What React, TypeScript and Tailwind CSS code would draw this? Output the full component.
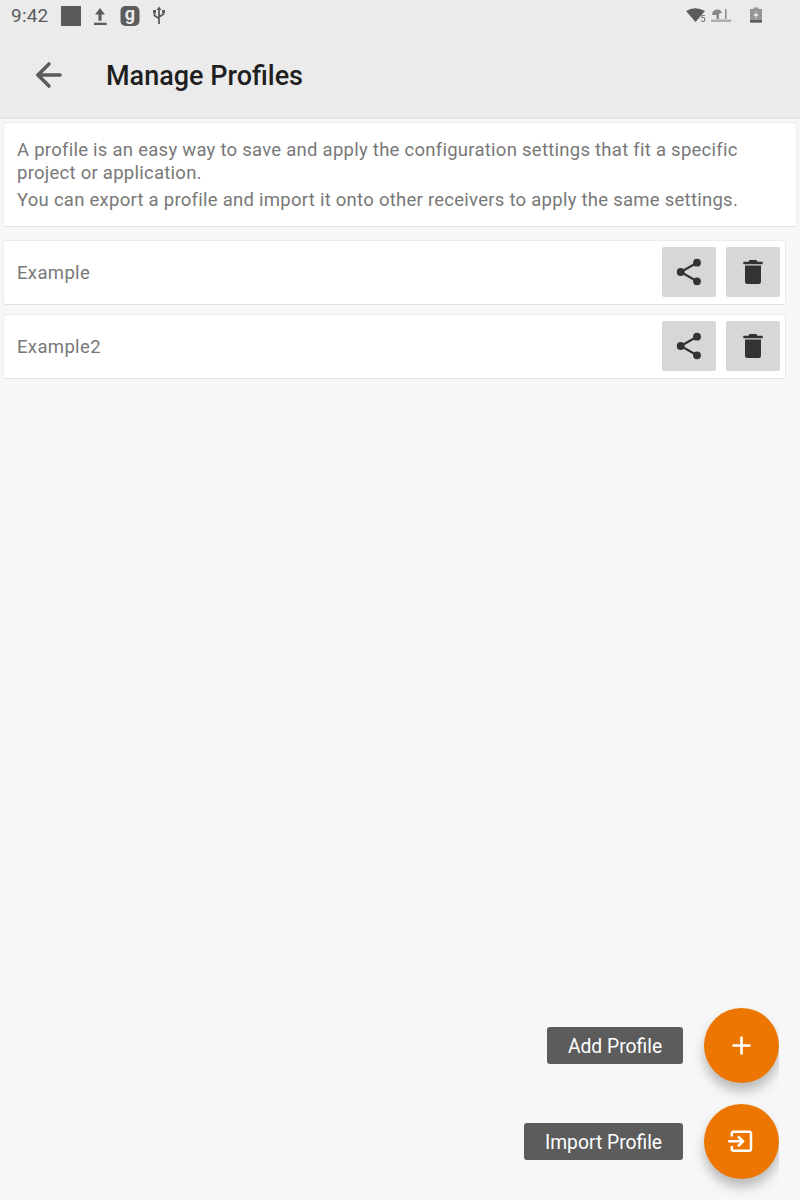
import { ArrowLeft } from 'lucide-react'

const profiles = ['Example', 'Example2']

function ShareIcon() {
  return (
    <svg width="28" height="28" viewBox="0 0 28 28" fill="none">
      <path d="M22 4.700 5.700 14 22 23.300" stroke="#333" strokeWidth="2.200" />
      <circle cx="22" cy="4.700" r="3.900" fill="#333" />
      <circle cx="5.700" cy="14" r="3.900" fill="#333" />
      <circle cx="22" cy="23.300" r="3.900" fill="#333" />
    </svg>
  )
}

function TrashIcon() {
  return (
    <svg width="28" height="28" viewBox="0 0 28 28" fill="#333">
      <path d="M4.300 3.800h19.400v2.500H4.300zM9.500 3.800l1-1.800h7l1 1.800z" />
      <path d="M6 7.500h16v16.300a2.200 2.200 0 0 1-2.200 2.200H8.200A2.200 2.200 0 0 1 6 23.800z" />
    </svg>
  )
}

function StatusBar() {
  return (
    <div className="flex h-[32px] items-center text-[#5c5c5c]">
      <span className="ml-[11px] mt-[1px] text-[19px] tracking-[0.2px]">9:42</span>
      <div className="ml-[13px] h-[20px] w-[20px] bg-[#5a5a5a]" />
      <svg className="ml-[11px]" width="16" height="20" viewBox="0 0 16 20" fill="#5c5c5c">
        <path d="M8 2 13 8.500H9.600V14.700H6.400V8.500H3z" />
        <rect x="2" y="16.700" width="12.700" height="2.300" />
      </svg>
      <svg className="ml-[12px]" width="20" height="20" viewBox="0 0 20 20">
        <rect width="19" height="20" x="0.500" rx="5" fill="#5c5c5c" />
        <text x="10" y="14" textAnchor="middle" fontSize="18" fontWeight="700" fill="#ebebeb" fontFamily="Roboto, sans-serif">g</text>
      </svg>
      <svg className="ml-[12px]" width="14" height="20" viewBox="0 0 14 20" fill="none" stroke="#5c5c5c" strokeWidth="1.800">
        <path d="M7 2v16M2.500 6v3.500L7 12.500M11.500 6v2L7 11" />
        <path d="M7 0.500 9.500 4H4.500z" fill="#5c5c5c" stroke="none" />
        <rect x="1" y="4" width="3" height="3" fill="#5c5c5c" stroke="none" />
        <rect x="10" y="4" width="3" height="3" fill="#5c5c5c" stroke="none" />
      </svg>
      <div className="mb-[3px] ml-auto mr-[38px] flex items-center blur-[0.4px]">
        <svg width="21" height="16" viewBox="0 0 21 16">
          <path d="M0 4Q9-1.500 19 4L9.500 15z" fill="#5c5c5c" />
          <text x="14.500" y="15" fontSize="9" fill="#5c5c5c" fontFamily="Roboto, sans-serif">5</text>
        </svg>
        <svg className="ml-[4px] opacity-70" width="20" height="16" viewBox="0 0 20 16" fill="#5c5c5c">
          <path d="M1 8Q1 3 6 2.500Q10 2 11 6 8 6 8 7L8 12H5.500V8z" />
          <rect x="14" y="2" width="1.500" height="10" />
          <path d="M0 12.500h20v2.500H0z" opacity="0.6" />
        </svg>
        <svg className="ml-[19px]" width="12" height="16" viewBox="0 0 12 16" fill="#5c5c5c">
          <path d="M3.500 0.500h5V2H12v13.500H0V2h3.500z" opacity="0.6" />
          <rect y="13" width="12" height="2.500" />
          <path d="M7.500 3 3.500 9h2.500L4.500 13 8.500 7H6z" fill="#ebebeb" />
        </svg>
      </div>
    </div>
  )
}

export default function App() {
  return (
    <div className="relative h-[1200px] w-[800px] overflow-hidden bg-[#f7f7f7] font-['Roboto',sans-serif]">
      {/* Header */}
      <div className="h-[119px] border-b-2 border-[#e4e4e4] bg-[#ebebeb]">
        <StatusBar />
        <div className="flex h-[85px] items-center">
          <ArrowLeft className="ml-[30px] text-[#5c5c5c]" size={38} strokeWidth={2.2} />
          <h1 className="ml-[38px] mt-[4px] text-[27px] font-medium text-[#1f1f1f]">Manage Profiles</h1>
        </div>
      </div>

      {/* Description */}
      <div className="mx-[3px] mt-[3px] h-[105px] rounded-[3px] border border-[#ebebeb] border-b-[#e2e2e2] bg-white px-[13px] pt-[16px] text-[18.5px] leading-[23px] tracking-[0.26px] text-[#787878]">
        <p>A profile is an easy way to save and apply the configuration settings that fit a specific project or application.</p>
        <p className="mt-[4px]">You can export a profile and import it onto other receivers to apply the same settings.</p>
      </div>

      {/* Profile rows */}
      <div className="mt-[13px] flex flex-col gap-[9px] pl-[3px]">
        {profiles.map((name) => (
          <div key={name} className="flex h-[65px] w-[783px] items-center rounded-[3px] border border-[#ebebeb] border-b-[#e2e2e2] bg-white pl-[13px] pr-[5px]">
            <span className="mt-[3px] text-[18.5px] tracking-[0.35px] text-[#787878]">{name}</span>
            <div className="mb-[1px] ml-auto flex gap-[10px]">
              <button className="flex h-[50px] w-[54px] items-center justify-center rounded-[2px] bg-[#d6d7d7]">
                <ShareIcon />
              </button>
              <button className="flex h-[50px] w-[54px] items-center justify-center rounded-[2px] bg-[#d6d7d7]">
                <TrashIcon />
              </button>
            </div>
          </div>
        ))}
      </div>

      {/* Floating actions */}
      <div className="absolute right-[21px] top-[1008px] flex flex-col gap-[21px]">
        <div className="flex h-[75px] items-center justify-end gap-[21px]">
          <span className="flex h-[37px] w-[136px] items-center justify-center rounded-[3px] bg-[#5c5c5c] pt-[4px] text-[19.3px] text-white">Add Profile</span>
          <div className="flex h-[75px] w-[75px] items-center justify-center rounded-full bg-[#ec7600] shadow-[0_8px_12px_rgba(0,0,0,0.25)] [clip-path:inset(-24px_0_-24px_-24px)]">
            <svg width="28" height="28" viewBox="0 0 28 28" stroke="#fff" strokeWidth="2.600">
              <path d="M13.500 4.500v18M4.500 13.500h18" />
            </svg>
          </div>
        </div>
        <div className="flex h-[75px] items-center justify-end gap-[21px]">
          <span className="flex h-[37px] w-[159px] items-center justify-center rounded-[3px] bg-[#5c5c5c] pt-[4px] text-[19.3px] text-white">Import Profile</span>
          <div className="flex h-[75px] w-[75px] items-center justify-center rounded-full bg-[#ec7600] shadow-[0_8px_12px_rgba(0,0,0,0.25)] [clip-path:inset(-24px_0_-24px_-24px)]">
            <svg width="28" height="28" viewBox="0 0 28 28" fill="none" stroke="#fff" strokeWidth="2.500">
              <path d="M3.800 8.500V5.500a1.500 1.500 0 0 1 1.500-1.700H21.500a1.500 1.500 0 0 1 1.500 1.700V21a1.500 1.500 0 0 1-1.500 1.700H5.300a1.500 1.500 0 0 1-1.500-1.700v-3" />
              <path d="M0.200 13.300H14.500M10 8.300l5 5-5 5" />
            </svg>
          </div>
        </div>
      </div>
    </div>
  )
}
